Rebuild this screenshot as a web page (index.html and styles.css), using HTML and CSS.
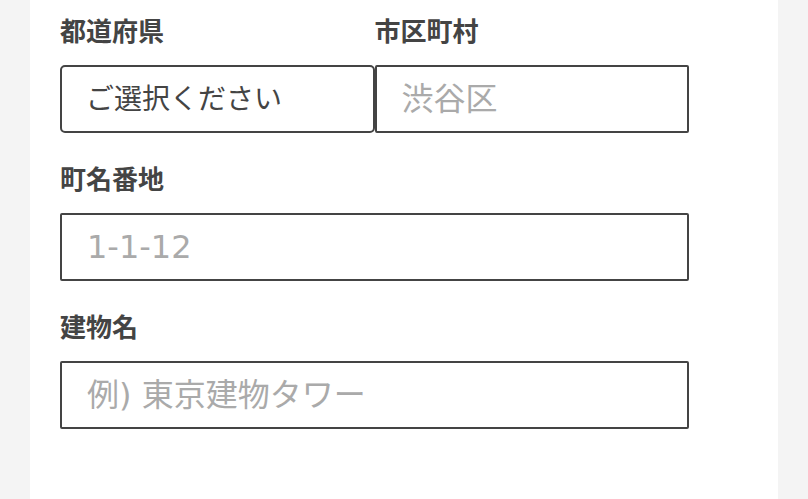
FILE: index.html
```html
<!DOCTYPE html>
<html lang="ja">
<head>
<meta charset="utf-8">
<link rel="stylesheet" href="styles.css">
</head>
<body>
<div class="panel">
  <div class="form">
    <div class="row">
      <div class="group half">
        <label class="label">都道府県</label>
        <select class="field select"><option>ご選択ください</option></select>
      </div>
      <div class="group half">
        <label class="label">市区町村</label>
        <input class="field" type="text" placeholder="渋谷区">
      </div>
    </div>
    <div class="group">
      <label class="label">町名番地</label>
      <input class="field" type="text" placeholder="1-1-12">
    </div>
    <div class="group">
      <label class="label">建物名</label>
      <input class="field" type="text" placeholder="例) 東京建物タワー">
    </div>
  </div>
</div>
</body>
</html>
```

FILE: styles.css
```css
html, body {
  margin: 0;
  padding: 0;
  height: 100%;
}
body {
  background: #f4f4f4;
  font-family: "DejaVu Sans", "Noto Sans CJK JP", sans-serif;
  color: #444;
}
.panel {
  margin-left: 30px;
  width: 748px;
  min-height: 100%;
  background: #fff;
  padding: 12px 30px 0;
  box-sizing: border-box;
}
.form {
  width: 629px;
}
.row {
  display: flex;
}
.half {
  flex: 1;
  min-width: 0;
}
.group {
  margin-bottom: 27px;
}
.label {
  display: block;
  font-family: "Noto Sans CJK JP", sans-serif;
  font-size: 26px;
  line-height: 36px;
  font-weight: 700;
  color: #444;
  margin-bottom: 17px;
}
.field {
  display: block;
  width: 100%;
  height: 68px;
  box-sizing: border-box;
  border: 2px solid #444;
  border-radius: 2px;
  background: #fff;
  padding: 0 25px;
  font-family: "DejaVu Sans", "Noto Sans CJK JP", sans-serif;
  font-size: 32px;
  color: #444;
  outline: none;
  margin: 0;
  -webkit-appearance: none;
  appearance: none;
}
.select {
  border-radius: 5px;
  font-size: 28px;
  padding: 0 24px;
}
.field::placeholder {
  color: #aaa;
}
```
